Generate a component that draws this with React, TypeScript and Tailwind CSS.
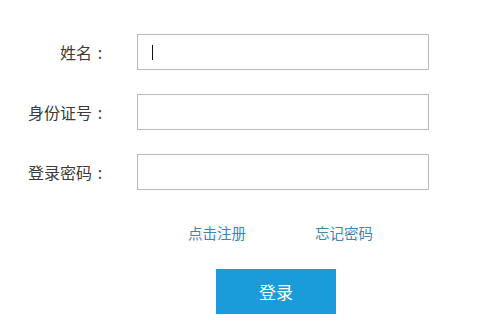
import React from "react";

const font = { fontFamily: '"Noto Sans CJK SC", "Noto Sans", sans-serif' };

function Row({ label, cursor }: { label: string; cursor?: boolean }) {
  return (
    <div className="flex items-center h-[36px]">
      <div className="w-[108px] flex justify-end items-center text-[16px] text-[#3a3a3a] leading-none">
        <span>{label}</span>
        <span className="w-[16px] text-center">:</span>
      </div>
      <div className="ml-[29px] w-[292px] h-[36px] border border-[#bcbcbc] bg-white flex items-center">
        {cursor && <div className="ml-[14px] w-px h-[15px] bg-[#111]" />}
      </div>
    </div>
  );
}

export default function App() {
  return (
    <div className="w-[480px] h-[331px] bg-white overflow-hidden" style={font}>
      <div className="pt-[34px] flex flex-col gap-[24px]">
        <Row label="姓名" cursor />
        <Row label="身份证号" />
        <Row label="登录密码" />
      </div>
      <div className="mt-[33px] h-[20px] flex items-center pl-[188px] text-[14.5px] text-[#3b86b0] leading-[20px]">
        <span>点击注册</span>
        <span className="ml-[69px]">忘记密码</span>
      </div>
      <div className="mt-[26px] pl-[216px]">
        <div className="w-[120px] h-[45px] bg-[#1a9cda] flex items-center justify-center text-white text-[17px]">
          登录
        </div>
      </div>
    </div>
  );
}
